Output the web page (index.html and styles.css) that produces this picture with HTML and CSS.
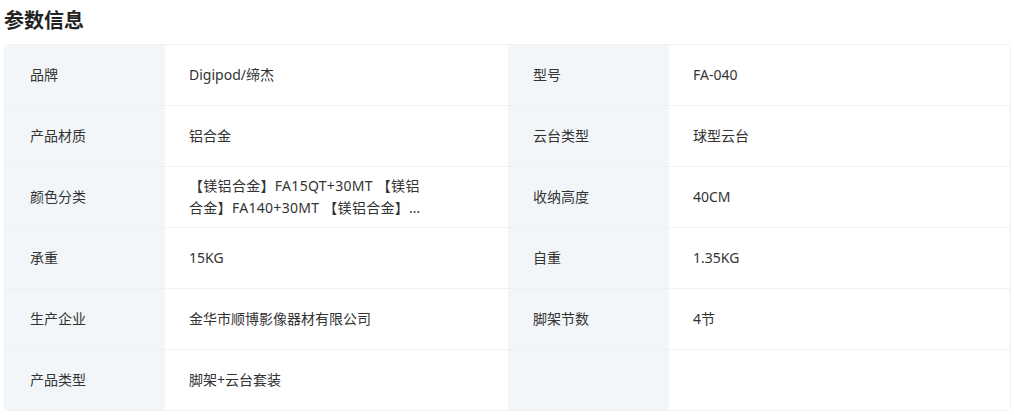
FILE: index.html
```html
<!DOCTYPE html>
<html lang="zh-CN">
<head>
<meta charset="utf-8">
<title>参数信息</title>
<link rel="stylesheet" href="styles.css">
</head>
<body>
<div class="page">
  <h2 class="title">参数信息</h2>
  <div class="table">
    <div class="row">
      <div class="cell label">品牌</div>
      <div class="cell value">Digipod/缔杰</div>
      <div class="cell label">型号</div>
      <div class="cell value">FA-040</div>
    </div>
    <div class="row">
      <div class="cell label">产品材质</div>
      <div class="cell value">铝合金</div>
      <div class="cell label">云台类型</div>
      <div class="cell value">球型云台</div>
    </div>
    <div class="row">
      <div class="cell label">颜色分类</div>
      <div class="cell value"><span class="clamp">【镁铝合金】FA15QT+30MT 【镁铝合金】FA140+30MT 【镁铝合金】FA15QT+40MT 【镁铝合金】FA140+40MT</span></div>
      <div class="cell label">收纳高度</div>
      <div class="cell value">40CM</div>
    </div>
    <div class="row">
      <div class="cell label">承重</div>
      <div class="cell value">15KG</div>
      <div class="cell label">自重</div>
      <div class="cell value">1.35KG</div>
    </div>
    <div class="row">
      <div class="cell label">生产企业</div>
      <div class="cell value">金华市顺博影像器材有限公司</div>
      <div class="cell label">脚架节数</div>
      <div class="cell value">4节</div>
    </div>
    <div class="row last">
      <div class="cell label">产品类型</div>
      <div class="cell value">脚架+云台套装</div>
      <div class="cell label"></div>
      <div class="cell value"></div>
    </div>
  </div>
</div>
</body>
</html>
```
FILE: styles.css
```css
* { box-sizing: border-box; }
html, body { margin: 0; padding: 0; background: #fff; }
body {
  font-family: "Noto Sans", "Noto Sans CJK SC", sans-serif;
  color: #333;
}
.page {
  padding: 4px 3px 0 4px;
}
.title {
  margin: 0 0 8px 0;
  font-family: "Noto Sans CJK SC", sans-serif;
  font-size: 20px;
  line-height: 32px;
  font-weight: 700;
  color: #222;
}
.table {
  border: 1px solid #eef0f3;
  border-radius: 5px;
  overflow: hidden;
}
.row {
  display: grid;
  grid-template-columns: 160px 343px 161px 1fr;
  height: 61px;
  border-bottom: 1px solid #eef0f3;
}
.row.last { border-bottom: none; height: 60px; }
.cell {
  display: flex;
  align-items: center;
  font-size: 14px;
  line-height: 22px;
}
.label {
  background: #f3f6f9;
  padding-left: 25px;
  color: #333;
}
.value {
  background: #fff;
  padding-left: 24px;
  padding-right: 24px;
  color: #333;
}
.clamp {
  max-width: 243px;
  letter-spacing: 0.3px;
  display: -webkit-box;
  -webkit-line-clamp: 2;
  -webkit-box-orient: vertical;
  overflow: hidden;
}
```
